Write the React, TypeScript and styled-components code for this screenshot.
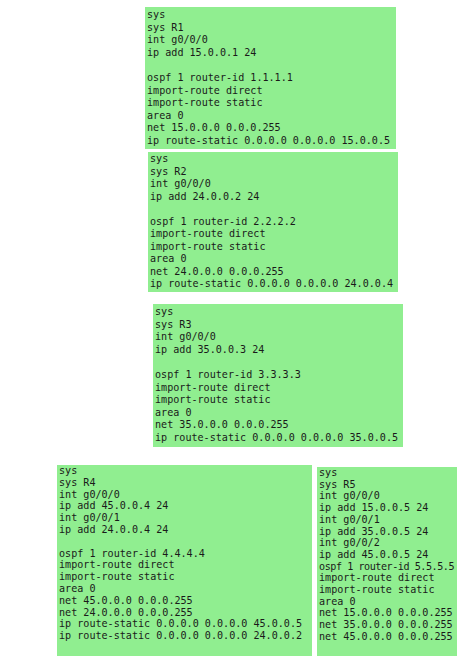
import React from "react";
import styled, { createGlobalStyle } from "styled-components";

const Global = createGlobalStyle`
  html, body { margin: 0; padding: 0; background: #ffffff; }
  body { font-family: "DejaVu Sans Mono", "Liberation Mono", monospace; }
`;

const Page = styled.div`
  width: 473px;
  height: 659px;
  padding-top: 7px;
  box-sizing: border-box;
  display: flex;
  flex-direction: column;
  align-items: flex-start;
  overflow: hidden;
`;

const Block = styled.pre<{ $left: number; $width: number; $height: number; $lh: number; $gap: number; $pad: number }>`
  margin: 0;
  margin-left: ${(p) => p.$left}px;
  margin-bottom: ${(p) => p.$gap}px;
  width: ${(p) => p.$width}px;
  height: ${(p) => p.$height}px;
  box-sizing: border-box;
  padding: ${(p) => p.$pad}px 0 0 2px;
  background: #90ee90;
  color: #1a1a1a;
  font-family: "DejaVu Sans Mono", "Liberation Mono", monospace;
  font-size: 10.1px;
  line-height: ${(p) => p.$lh}px;
  white-space: pre;
`;

const Tight = styled.span`
  letter-spacing: -0.45px;
`;

const Row = styled.div`
  display: flex;
  align-items: flex-start;
  padding-left: 57px;
  gap: 5px;
`;

const Col = styled.div<{ $top: number }>`
  display: flex;
  flex-direction: column;
  padding-top: ${(p) => p.$top}px;
`;

const r1 = `sys
sys R1
int g0/0/0
ip add 15.0.0.1 24

ospf 1 router-id 1.1.1.1
import-route direct
import-route static
area 0
net 15.0.0.0 0.0.0.255
ip route-static 0.0.0.0 0.0.0.0 15.0.0.5`;

const r2 = `sys
sys R2
int g0/0/0
ip add 24.0.0.2 24

ospf 1 router-id 2.2.2.2
import-route direct
import-route static
area 0
net 24.0.0.0 0.0.0.255
ip route-static 0.0.0.0 0.0.0.0 24.0.0.4`;

const r3 = `sys
sys R3
int g0/0/0
ip add 35.0.0.3 24

ospf 1 router-id 3.3.3.3
import-route direct
import-route static
area 0
net 35.0.0.0 0.0.0.255
ip route-static 0.0.0.0 0.0.0.0 35.0.0.5`;

const r4 = `sys
sys R4
int g0/0/0
ip add 45.0.0.4 24
int g0/0/1
ip add 24.0.0.4 24

ospf 1 router-id 4.4.4.4
import-route direct
import-route static
area 0
net 45.0.0.0 0.0.0.255
net 24.0.0.0 0.0.0.255
ip route-static 0.0.0.0 0.0.0.0 45.0.0.5
ip route-static 0.0.0.0 0.0.0.0 24.0.0.2`;

const r5a = `sys
sys R5
int g0/0/0
ip add 15.0.0.5 24
int g0/0/1
ip add 35.0.0.5 24
int g0/0/2
ip add 45.0.0.5 24
`;
const r5b = `ospf 1 router-id 5.5.5.5`;
const r5c = `
import-route direct
import-route static
area 0
net 15.0.0.0 0.0.0.255
net 35.0.0.0 0.0.0.255
net 45.0.0.0 0.0.0.255`;

export default function App() {
  return (
    <>
      <Global />
      <Page>
        <Block $left={145} $width={251} $height={142} $lh={12.6} $gap={3} $pad={2}>{r1}</Block>
        <Block $left={148} $width={250} $height={140} $lh={12.5} $gap={12} $pad={1}>{r2}</Block>
        <Block $left={153} $width={250} $height={143} $lh={12.6} $gap={18} $pad={2}>{r3}</Block>
        <Row>
          <Col $top={0}>
            <Block $left={0} $width={255} $height={191} $lh={11.8} $gap={0} $pad={0}>{r4}</Block>
          </Col>
          <Col $top={2}>
            <Block $left={0} $width={140} $height={189} $lh={11.7} $gap={0} $pad={0}>
              {r5a}
              <Tight>{r5b}</Tight>
              {r5c}
            </Block>
          </Col>
        </Row>
      </Page>
    </>
  );
}
